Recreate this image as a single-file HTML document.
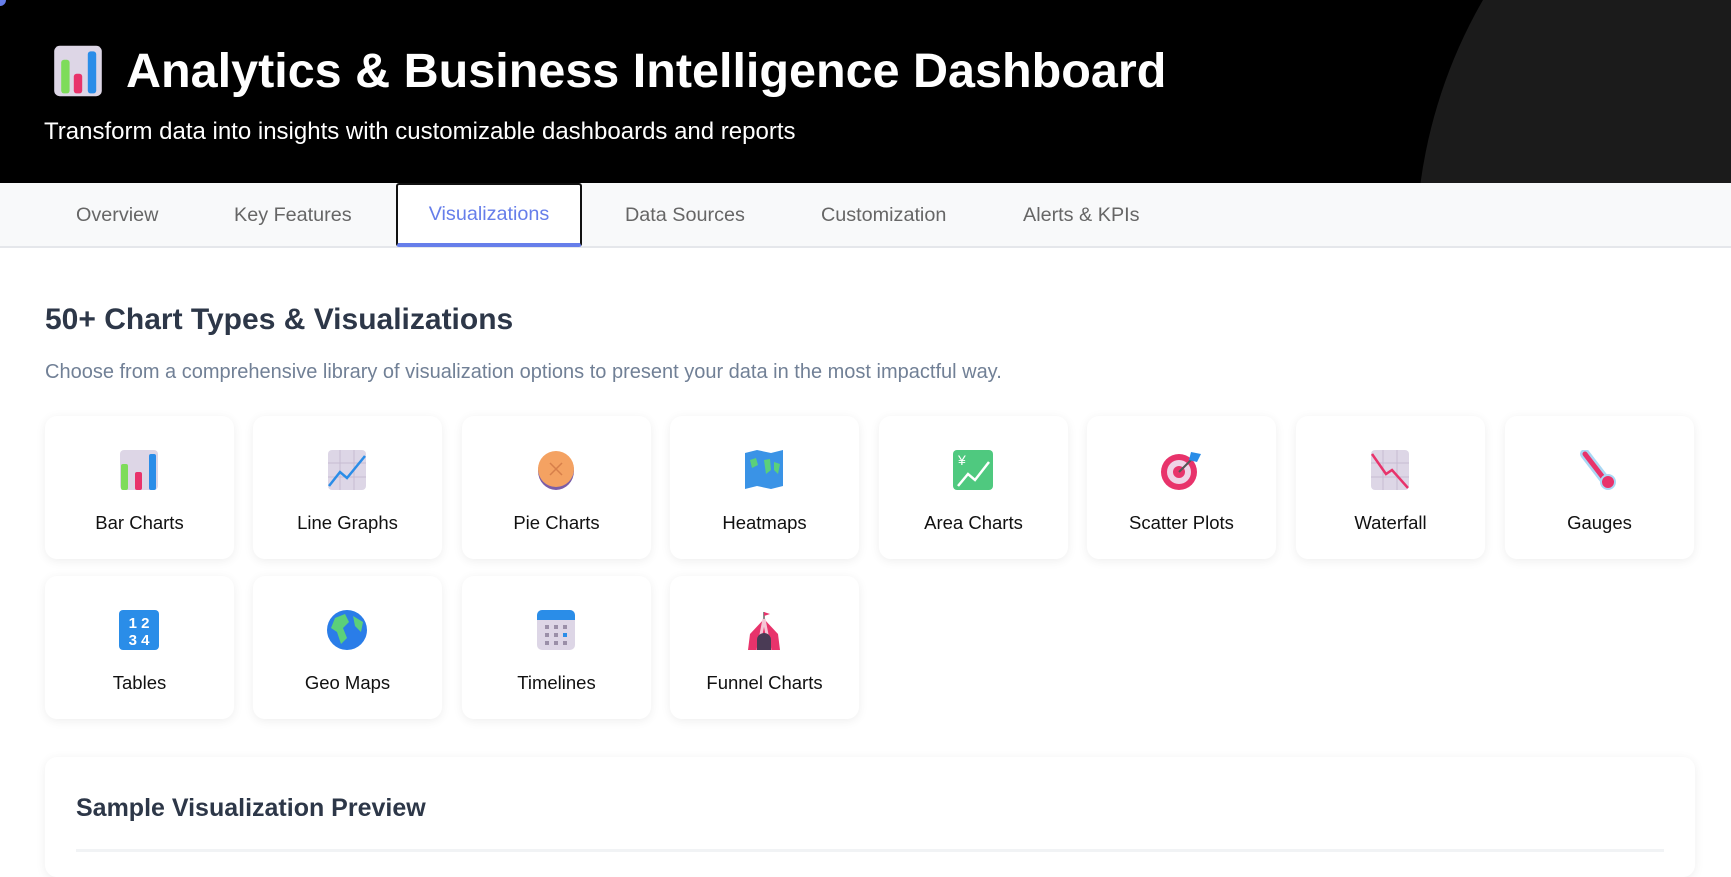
<!DOCTYPE html>
<html><head><meta charset="utf-8"><style>
*{margin:0;padding:0;box-sizing:border-box}
body{width:1731px;height:852px;overflow:hidden;background:#fff;font-family:"Liberation Sans",sans-serif;position:relative}
.hdr{position:absolute;left:0;top:0;width:1731px;height:183px;background:#000;overflow:hidden}
.circ{position:absolute;left:1416px;top:-250px;width:1000px;height:1000px;border-radius:50%;background:#1b1b1b}
.hdr h1{position:absolute;left:50px;top:43px;color:#fff;font-size:48.5px;font-weight:bold;display:flex;align-items:center;gap:20px;white-space:nowrap}
.hdr p{position:absolute;left:44px;top:118px;color:#fff;font-size:24px;white-space:nowrap}
.nav{position:absolute;left:0;top:183px;width:1731px;height:65px;background:#f8f9fa;border-bottom:2px solid #e5e7eb}
.tab{position:absolute;top:0;height:64px;line-height:64px;font-size:19.8px;color:#666;white-space:nowrap}
.active{left:396px;width:186px;text-align:center;background:#fff;border:2px solid #111;border-bottom:4px solid #667eea;border-radius:3px;color:#667eea;line-height:58px}
h2{position:absolute;left:45px;top:303px;font-size:30px;color:#2d3748;font-weight:bold;white-space:nowrap}
.desc{position:absolute;left:45px;top:361px;font-size:20px;color:#718096;white-space:nowrap}
.card{position:absolute;width:189px;height:143px;background:#fff;border-radius:12px;box-shadow:0 2px 10px rgba(0,0,0,.07);text-align:center}
.card svg{position:absolute;left:74px;top:34px;width:40px;height:40px}
.card span{position:absolute;left:0;right:0;top:96px;font-size:18.5px;color:#111}
.prev{position:absolute;left:45px;top:757px;width:1650px;height:120px;background:#fff;border-radius:12px;box-shadow:0 2px 10px rgba(0,0,0,.07)}
.prev h3{position:absolute;left:31px;top:37px;font-size:25px;color:#2d3748;font-weight:bold}
.prev .ln{position:absolute;left:31px;right:31px;top:92px;height:3px;background:#f1f3f5}
</style></head><body>
<div class="hdr"><div class="circ"></div>
<div style="position:absolute;left:-6px;top:-6px;width:12px;height:12px;border-radius:50%;background:#667eea"></div>
<h1><svg width="56" height="56" viewBox="0 0 40 40"><rect x="3" y="2" width="34" height="36" rx="4" fill="#ddd6e6"/><rect x="8" y="12" width="6" height="24" rx="2" fill="#7edc5a"/><rect x="17" y="22" width="6" height="14" rx="2" fill="#e8336b"/><rect x="27" y="6" width="6" height="30" rx="2" fill="#2a8de8"/></svg>Analytics &amp; Business Intelligence Dashboard</h1>
<p>Transform data into insights with customizable dashboards and reports</p></div>
<div class="nav">
<div class="tab" style="left:76px">Overview</div>
<div class="tab" style="left:234px">Key Features</div>
<div class="tab active">Visualizations</div>
<div class="tab" style="left:625px">Data Sources</div>
<div class="tab" style="left:821px">Customization</div>
<div class="tab" style="left:1023px">Alerts &amp; KPIs</div>
</div>
<h2>50+ Chart Types &amp; Visualizations</h2>
<div class="desc">Choose from a comprehensive library of visualization options to present your data in the most impactful way.</div>

<div class="card" style="left:45px;top:416px"><svg viewBox="0 0 40 40"><rect x="1" y="0" width="38" height="40" rx="4" fill="#ddd6e6"/><rect x="2" y="14" width="7" height="26" rx="2" fill="#7edc5a"/><rect x="16" y="22" width="7" height="18" rx="2" fill="#e8336b"/><rect x="30" y="4" width="7" height="36" rx="2" fill="#2a8de8"/></svg><span>Bar Charts</span></div>
<div class="card" style="left:253px;top:416px"><svg viewBox="0 0 40 40"><rect x="1" y="0" width="38" height="40" rx="4" fill="#ddd6e6"/><path d="M1 13H39M1 27H39M13 0V40M27 0V40" stroke="#c6bcd2"/><path d="M2 36L13 22L20 28L38 6" stroke="#2a8de8" stroke-width="2.5" fill="none"/></svg><span>Line Graphs</span></div>
<div class="card" style="left:462px;top:416px"><svg viewBox="0 0 40 40"><ellipse cx="20" cy="21" rx="18" ry="19" fill="#7b5ea7"/><ellipse cx="20" cy="19" rx="18" ry="18" fill="#f4a262"/><path d="M14 13L26 25M26 13L14 25" stroke="#d77f4a" stroke-width="1.5"/></svg><span>Pie Charts</span></div>
<div class="card" style="left:670px;top:416px"><svg viewBox="0 0 40 40"><path d="M1 3L13 0L27 3L39 0V36L27 39L13 36L1 39Z" fill="#3a93e6"/><path d="M6 10L12 8L14 15L8 18ZM20 10L26 9L27 20L22 24ZM30 12L36 14L34 24L30 20Z" fill="#5bd07a"/></svg><span>Heatmaps</span></div>
<div class="card" style="left:879px;top:416px"><svg viewBox="0 0 40 40"><rect x="0" y="0" width="40" height="40" rx="4" fill="#4fc97f"/><text x="5" y="15" font-size="14" fill="#fff" font-family="Liberation Sans">¥</text><path d="M5 36L15 24L22 30L36 12" stroke="#fff" stroke-width="2.5" fill="none"/></svg><span>Area Charts</span></div>
<div class="card" style="left:1087px;top:416px"><svg viewBox="0 0 40 40"><circle cx="18" cy="22" r="18" fill="#e8336b"/><circle cx="18" cy="22" r="12" fill="#efd3e6"/><circle cx="18" cy="22" r="6" fill="#e8336b"/><path d="M18 22L34 6" stroke="#555" stroke-width="2"/><path d="M30 2L40 4L36 12L28 10Z" fill="#2a8de8"/></svg><span>Scatter Plots</span></div>
<div class="card" style="left:1296px;top:416px"><svg viewBox="0 0 40 40"><rect x="1" y="0" width="38" height="40" rx="4" fill="#ddd6e6"/><path d="M1 13H39M1 27H39M13 0V40M27 0V40" stroke="#c6bcd2"/><path d="M2 4L16 24L22 20L38 38" stroke="#e8336b" stroke-width="2.5" fill="none"/></svg><span>Waterfall</span></div>
<div class="card" style="left:1505px;top:416px"><svg viewBox="0 0 40 40"><path d="M6 4L26 30" stroke="#a9d8f5" stroke-width="10" stroke-linecap="round"/><path d="M6 4L26 30" stroke="#e8336b" stroke-width="5" stroke-linecap="round"/><circle cx="29" cy="32" r="7" fill="#e8336b" stroke="#a9d8f5" stroke-width="2"/></svg><span>Gauges</span></div>

<div class="card" style="left:45px;top:576px"><svg viewBox="0 0 40 40"><rect x="0" y="0" width="40" height="40" rx="4" fill="#2a8de8"/><text x="20" y="18" text-anchor="middle" font-size="15" font-weight="bold" fill="#fff" font-family="Liberation Sans">1 2</text><text x="20" y="35" text-anchor="middle" font-size="15" font-weight="bold" fill="#fff" font-family="Liberation Sans">3 4</text></svg><span>Tables</span></div>
<div class="card" style="left:253px;top:576px"><svg viewBox="0 0 40 40"><circle cx="20" cy="20" r="20" fill="#2a7de8"/><path d="M8 8L18 4L22 12L16 18L20 28L14 34L10 22L4 18Z M26 6L36 12L34 22L28 16Z" fill="#5bd07a"/></svg><span>Geo Maps</span></div>
<div class="card" style="left:462px;top:576px"><svg viewBox="0 0 40 40"><rect x="1" y="0" width="38" height="40" rx="5" fill="#ddd6e6"/><path d="M1 10V5a5 5 0 0 1 5-5h28a5 5 0 0 1 5 5v5Z" fill="#2a8de8"/><g fill="#9a8fa8"><rect x="9" y="15" width="4" height="4"/><rect x="18" y="15" width="4" height="4"/><rect x="27" y="15" width="4" height="4"/><rect x="9" y="23" width="4" height="4"/><rect x="18" y="23" width="4" height="4"/><rect x="9" y="31" width="4" height="4"/><rect x="18" y="31" width="4" height="4"/><rect x="27" y="31" width="4" height="4"/></g><rect x="27" y="23" width="4" height="4" fill="#2a8de8"/></svg><span>Timelines</span></div>
<div class="card" style="left:670px;top:576px"><svg viewBox="0 0 40 40"><path d="M20 2V10" stroke="#666" stroke-width="1.5"/><path d="M20 2L26 4L20 6Z" fill="#e8336b"/><path d="M20 9L34 24L36 40H4L6 24Z" fill="#e8336b"/><path d="M20 9L14 40M20 9L26 40" stroke="#f5c6d6" stroke-width="3"/><path d="M13 40V30a7 7 0 0 1 14 0V40Z" fill="#4a3b55"/></svg><span>Funnel Charts</span></div>

<div class="prev"><h3>Sample Visualization Preview</h3><div class="ln"></div></div>
</body></html>
